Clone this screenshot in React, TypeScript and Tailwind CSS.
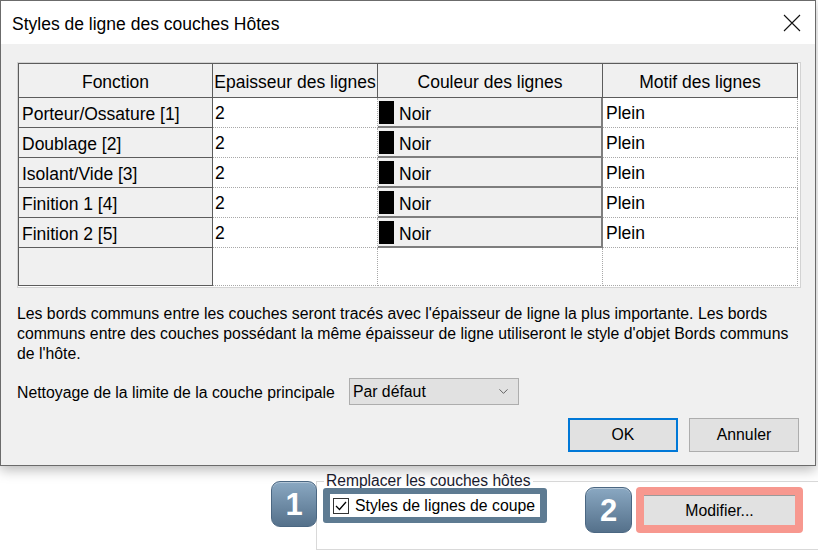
import { ChevronDown } from "lucide-react";

type LayerRow = {
  fonction: string;
  epaisseur: string;
  couleur: string;
  motif: string;
};

const rows: LayerRow[] = [
  { fonction: "Porteur/Ossature [1]", epaisseur: "2", couleur: "Noir", motif: "Plein" },
  { fonction: "Doublage [2]", epaisseur: "2", couleur: "Noir", motif: "Plein" },
  { fonction: "Isolant/Vide [3]", epaisseur: "2", couleur: "Noir", motif: "Plein" },
  { fonction: "Finition 1 [4]", epaisseur: "2", couleur: "Noir", motif: "Plein" },
  { fonction: "Finition 2 [5]", epaisseur: "2", couleur: "Noir", motif: "Plein" },
];

const headers = ["Fonction", "Epaisseur des lignes", "Couleur des lignes", "Motif des lignes"];

const headCell =
  "flex items-center justify-center whitespace-nowrap border-b border-r border-[#5c5c5c] bg-[#f0f0f0] pt-[3px]";
const rowHeadCell =
  "flex items-center whitespace-nowrap border-b border-r border-[#5c5c5c] bg-[#f0f0f0] pl-[3px] pt-[3px]";
const dataCell = "flex items-center border-b border-r border-dotted border-[#a8a8a8] bg-white pl-[2px] pt-[2px]";

function Badge({ n, className }: { n: string; className: string }) {
  return (
    <div
      className={`absolute z-20 flex items-center justify-center rounded-[9px] border border-[#4b6782] bg-gradient-to-b from-[#8aa8c2] to-[#55718b] text-[31px] font-bold leading-none text-white shadow-[inset_0_1px_0_rgba(255,255,255,0.35)] ${className}`}
    >
      {n}
    </div>
  );
}

export default function App() {
  return (
    <div className="relative h-[552px] w-[818px] overflow-hidden bg-white font-['Liberation_Sans',Arial,sans-serif] text-black">
      {/* dialog */}
      <div className="relative z-10 w-[816px] border border-[#6b6b6b] bg-[#f0f0f0] shadow-[0_4px_12px_rgba(0,0,0,0.28)]">
        <div className="flex h-[43px] items-center justify-between bg-white pl-[11px] pr-[14px] pt-[4px]">
          <span className="text-[17.5px]">Styles de ligne des couches Hôtes</span>
          <svg width="18" height="18" viewBox="0 0 18 18" className="mt-[-4px]">
            <path d="M1 1 L17 17 M17 1 L1 17" stroke="#111" strokeWidth="1.1" fill="none" />
          </svg>
        </div>

        <div className="px-[16px] pb-[13px] pt-[18px]">
          <div className="h-[226px] w-[784px] border border-[#d3d3d3] bg-white">
            <div className="grid w-[780px] grid-cols-[194px_165px_225px_195px] grid-rows-[34px_30px_30px_30px_30px_30px_38px] border-l border-t border-[#5c5c5c] text-[17.5px]">
              {headers.map((h) => (
                <div key={h} className={headCell}>
                  {h}
                </div>
              ))}

              {rows.map((r) => (
                <div key={r.fonction} className="contents">
                  <div className={rowHeadCell}>{r.fonction}</div>
                  <div className={dataCell}>{r.epaisseur}</div>
                  <div className="flex items-center border-b-2 border-r-2 border-[#7e7e7e] bg-[#f0f0f0] pl-[1px]">
                    <span className="h-[23px] w-[15px] bg-black" />
                    <span className="ml-[5px] mt-[4px]">{r.couleur}</span>
                  </div>
                  <div className={`${dataCell} pl-[3px]`}>{r.motif}</div>
                </div>
              ))}

              <div className={rowHeadCell} />
              <div className={dataCell} />
              <div className={dataCell} />
              <div className={dataCell} />
            </div>
          </div>

          <p className="mt-[16px] w-[790px] text-[15.8px] leading-[20px]">
            Les bords communs entre les couches seront tracés avec l'épaisseur de ligne la plus importante. Les bords
            communs entre des couches possédant la même épaisseur de ligne utiliseront le style d'objet Bords communs
            de l'hôte.
          </p>

          <div className="mt-[14px] flex items-center">
            <span className="pt-[3px] text-[15.8px]">Nettoyage de la limite de la couche principale</span>
            <div className="ml-[14px] flex h-[27px] w-[170px] items-center justify-between border border-[#adadad] bg-[#e1e1e1] pl-[3px] pr-[7px] text-[15.8px]">
              <span>Par défaut</span>
              <ChevronDown className="h-[15px] w-[15px] text-[#444]" strokeWidth={1.3} />
            </div>
          </div>

          <div className="mt-[13px] flex justify-end gap-[11px]">
            <button className="flex h-[34px] w-[110px] items-center justify-center border border-[#0078d7] bg-[#e1e1e1] text-[15.8px] shadow-[inset_0_0_0_1px_#0078d7]">
              OK
            </button>
            <button className="flex h-[34px] w-[110px] items-center justify-center border border-[#adadad] bg-[#e1e1e1] text-[15.8px]">
              Annuler
            </button>
          </div>
        </div>
      </div>

      {/* page behind the dialog */}
      <div className="ml-[316px] mt-[15px] h-[69px] w-[520px] border-b border-l border-t border-[#d9d9d9]">
        <div className="-mt-[10px] ml-[7px] h-[18px] w-fit bg-white px-[2px] text-[15.6px] leading-[18px] text-[#1a1a2e]">
          Remplacer les couches hôtes
        </div>
        <div className="-mt-[3px] flex items-start">
          <div className="ml-[6px] mt-[1px] rounded-[3px] bg-[#5e7b92] px-[7px] py-[6px]">
            <div className="flex h-[23px] w-[210px] items-center bg-white">
              <span className="ml-[3px] flex h-[16px] w-[16px] items-center justify-center border border-[#333] bg-white">
                <svg width="14" height="14" viewBox="0 0 14 14">
                  <path d="M2 7 L5.5 10.5 L12 3" stroke="#000" strokeWidth="1.3" fill="none" />
                </svg>
              </span>
              <span className="ml-[6px] text-[15.8px]">Styles de lignes de coupe</span>
            </div>
          </div>
          <div className="ml-[89px] rounded-[4px] bg-[#f7988f] px-[8px] py-[8px]">
            <div className="flex h-[30px] w-[151px] items-center justify-center border-t border-[#9a9a9a] bg-[#e1e1e1] text-[15.8px]">
              Modifier...
            </div>
          </div>
        </div>
      </div>

      <Badge n="1" className="left-[271px] top-[481px] h-[46px] w-[46px]" />
      <Badge n="2" className="left-[585px] top-[487px] h-[46px] w-[47px]" />
    </div>
  );
}
